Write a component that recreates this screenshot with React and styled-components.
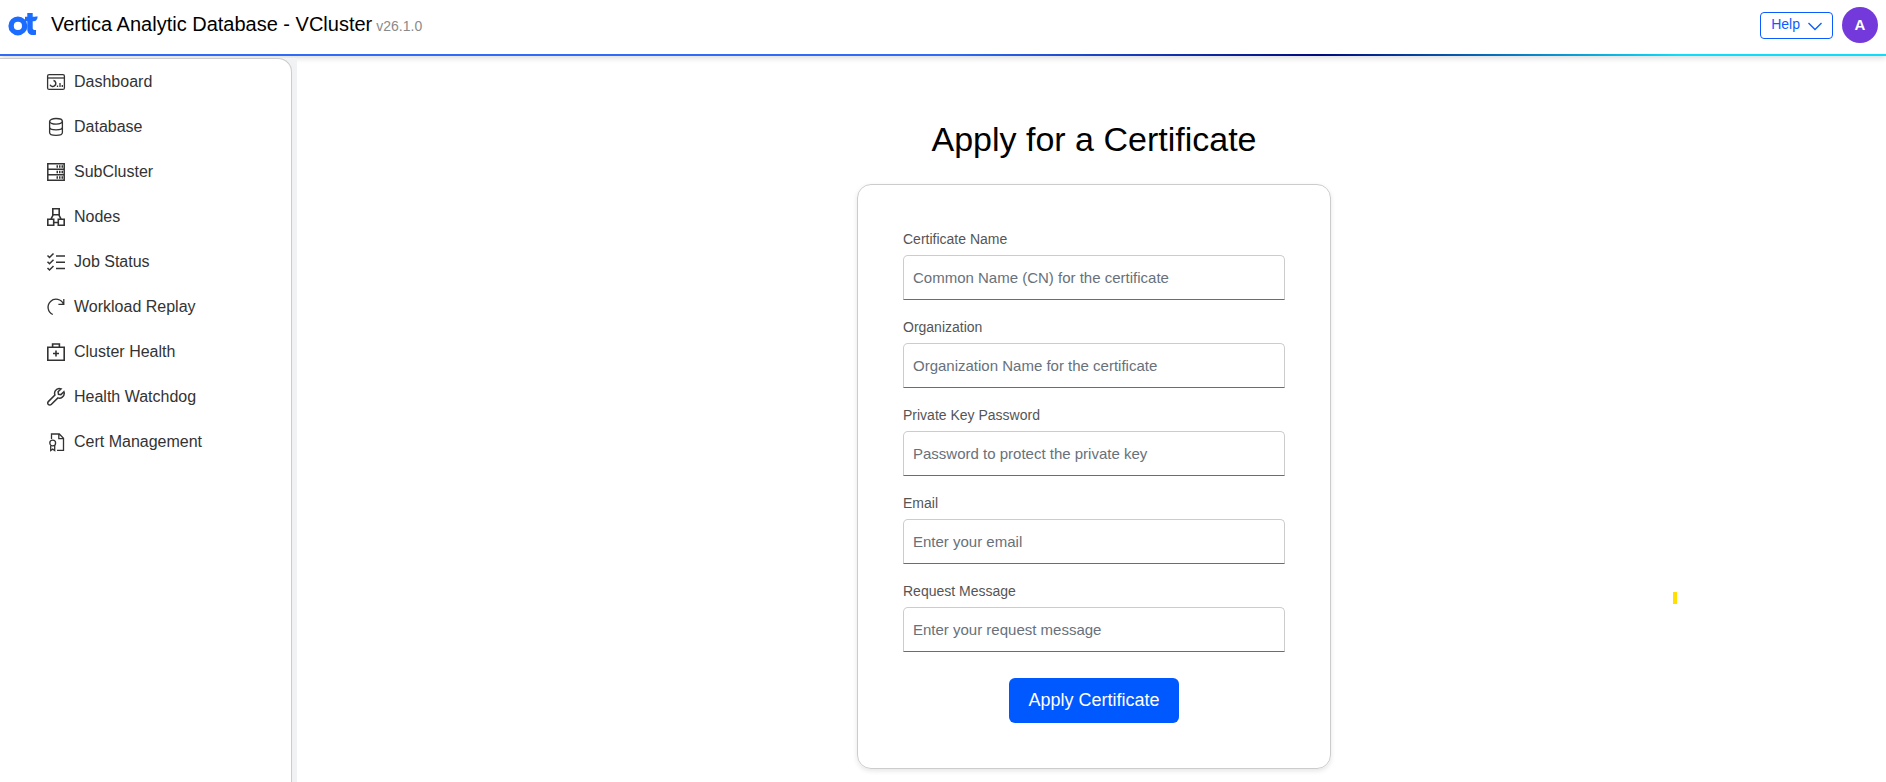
import React, { useState } from 'react'
import styled, { createGlobalStyle } from 'styled-components';

const GlobalStyle = createGlobalStyle`
  * {
    box-sizing: border-box;
  }
  body {
    margin: 0;
    background: #fff;
    color: #000;
    font-family: "Liberation Sans", Arial, sans-serif;
    font-size: 16px;
  }
`;

const Page = styled.div`
  display: flex;
  flex-direction: column;
  height: 100vh;
  overflow: hidden;
`;

const Header = styled.header`
  display: flex;
  align-items: center;
  flex: none;
  height: 56px;
  padding: 0 8px 4px;
  border-bottom: 2px solid;
  border-image: linear-gradient(90deg, #2f6df6 0%, #2f6df6 50%, #000a7d 70%, #0fdcf8 89%) 1;
  box-shadow: 0 2px 6px rgba(0, 0, 0, 0.15);
`;

const Brand = styled.div`
  display: flex;
  flex: 1;
  align-items: center;
  padding-bottom: 2px;
`;

const Product = styled.h1`
  margin: 0 4px 0 12px;
  font-size: 20px;
  font-weight: 400;
  line-height: 24px;
`;

const Version = styled.span`
  padding-top: 4px;
  color: #8a8a8a;
  font-size: 14px;
`;

const HelpButton = styled.button`
  display: flex;
  align-items: center;
  gap: 8px;
  height: 27px;
  margin-right: 9px;
  padding: 0 10px 2px;
  border: 1px solid #0a5cff;
  border-radius: 4px;
  background: #fff;
  color: #0a5cff;
  font-family: inherit;
  font-size: 14px;

  svg {
    margin-top: 4px;
  }
`;

const Avatar = styled.button`
  width: 36px;
  height: 36px;
  padding: 0 0 2px;
  border: 0;
  border-radius: 50%;
  background: #7439db;
  color: #fff;
  font-family: inherit;
  font-size: 15px;
  font-weight: 700;
`;

const Body = styled.div`
  display: flex;
  flex: 1;
  min-height: 0;
  padding-top: 2px;
`;

const SideArea = styled.div`
  flex: none;
  width: 297px;
  padding-right: 5px;
  background: #f1f2f4;
`;

const Sidebar = styled.nav`
  height: 100%;
  border: 1px solid #ccc;
  border-width: 1px 1px 0 0;
  border-radius: 0 14px 0 0;
  background: #fff;
`;

const Menu = styled.ul`
  margin: 0;
  padding: 0;
  list-style: none;
`;

const MenuLink = styled.a`
  display: flex;
  align-items: center;
  gap: 8px;
  height: 45px;
  padding-left: 46px;
  color: #333;
  text-decoration: none;

  svg {
    flex: none;
  }
`;

const Main = styled.main`
  display: flex;
  flex: 1;
  flex-direction: column;
  align-items: center;
  padding: 59px 0 0 5px;
`;

const Title = styled.h2`
  margin: 0 0 23px;
  font-size: 34px;
  font-weight: 400;
  line-height: 44px;
`;

const Card = styled.form`
  display: flex;
  flex-direction: column;
  width: 474px;
  padding: 45px;
  border: 1px solid #ccc;
  border-radius: 14px;
  box-shadow: 0 2px 5px rgba(0, 0, 0, 0.1);
`;

const Field = styled.div`
  display: flex;
  flex-direction: column;
  gap: 7px;
  margin-bottom: 18px;
`;

const Label = styled.label`
  color: #555;
  font-size: 14px;
  line-height: 18px;
`;

const Input = styled.input`
  height: 45px;
  padding: 0 9px;
  border: 1px solid #ccc;
  border-bottom-color: #6c6c72;
  border-radius: 5px 5px 0 0;
  background: #fff;
  font-family: inherit;
  font-size: 15px;

  &::placeholder {
    color: #67717b;
    opacity: 1;
  }
`;

const ApplyButton = styled.button`
  align-self: center;
  height: 45px;
  margin-top: 8px;
  padding: 0 19px;
  border: 0;
  border-radius: 6px;
  background: #0059ff;
  color: #fff;
  font-family: inherit;
  font-size: 18px;
`;

const Marker = styled.span`
  position: absolute;
  top: 592px;
  right: 209px;
  width: 4px;
  height: 12px;
  background: #ffe000;
`;

function Logo() {
  return (
    <svg width="31" height="24" viewBox="0 0 31 24" aria-hidden="true">
      <circle cx="9.9" cy="13.9" r="6.8" fill="none" stroke="#1b6cff" strokeWidth="5.4" />
      <path
        d="M19.3 1h5.4v3.700h1.600c1.200 0 1.500-.200 3.400-.200-.3 2.800-1.600 4.800-4 4.800h-1V16c0 1.500.7 2.100 3.300 2v4.700c-5.500 1-8.700-.9-8.700-5.500V9.300h-2.300V4.700h2.300z"
        fill="#1b6cff"
      />
    </svg>
  );
}

function Icon(props) {
  return (
    <svg width="20" height="20" viewBox="0 0 20 20" fill="none" stroke="#333" strokeWidth={props.weight || 1.3} aria-hidden="true">
      {props.children}
    </svg>
  );
}

const menuItems = [
  {
    name: 'Dashboard',
    icon: (
      <Icon>
        <rect x="1.6" y="2.6" width="16.8" height="14.8" rx="1.5" />
        <path d="M2 6h16" />
        <path d="M7.5 8.5a3 3 0 1 1-3.4 4.2" strokeWidth="1.5" />
        <path d="M11.5 15v-1.5M14 15v-4M16.3 15v-2" />
      </Icon>
    ),
  },
  {
    name: 'Database',
    icon: (
      <Icon>
        <ellipse cx="10" cy="4.3" rx="6.4" ry="2.8" />
        <path d="M3.6 4.3v11.2c0 1.6 2.8 2.9 6.4 2.9s6.4-1.300 6.400-2.900V4.300M3.600 10c0 1.600 2.800 2.900 6.400 2.900s6.400-1.300 6.400-2.900" />
      </Icon>
    ),
  },
  {
    name: 'SubCluster',
    icon: (
      <Icon weight={1.5}>
        <path d="M1.8 1.8h16.4v16.4H1.8zM1.8 7.3h16.4M1.8 12.7h16.4" />
        <path d="M10.5 4.6h6.5M10.5 10h6.5M10.5 15.4h6.5" strokeWidth="2.5" strokeDasharray="1.5 1" />
      </Icon>
    ),
  },
  {
    name: 'Nodes',
    icon: (
      <Icon weight={1.6}>
        <path d="M6.8 1.8h6.4v5.9H6.800zM1.800 12.300h5.900v5.900H1.800zM12.300 12.300h5.900v5.900h-5.900zM7.700 15.500h4.600M7.300 7.700l-2.500 4.600M12.700 7.700l2.500 4.600" />
      </Icon>
    ),
  },
  {
    name: 'Job Status',
    icon: (
      <Icon weight={1.5}>
        <path d="M1.5 3.500l2 2L7.500 1.500M1.500 9.700l2 2 4-4M1.500 16l2 2 4-4M10 4h9M10 10.200h9M10 16.400h9" />
      </Icon>
    ),
  },
  {
    name: 'Workload Replay',
    icon: (
      <Icon>
        <path d="M6.8 17.500A8 8 0 1 1 17.500 7.200M17.800 2v5.400h-5.400" />
      </Icon>
    ),
  },
  {
    name: 'Cluster Health',
    icon: (
      <Icon weight={1.6}>
        <path d="M1.8 5.300h16.400v12.900H1.800zM6.600 5.300V2h6.800v3.300M10 8.500v6M7 11.500h6" />
      </Icon>
    ),
  },
  {
    name: 'Health Watchdog',
    icon: (
      <Icon weight={1.5}>
        <path d="M17.9 4.700l-3 2.900-2.400-.3-.4-2.500 3-2.900c-2.100-.7-4.500 0-5.700 1.800-.9 1.300-1 2.900-.5 4.300l-6.600 6.600a2.050 2.050 0 0 0 2.900 2.900l6.700-6.600c1.500.5 3.200.2 4.400-.8 1.600-1.300 2.300-3.500 1.600-5.400z" />
      </Icon>
    ),
  },
  {
    name: 'Cert Management',
    icon: (
      <Icon>
        <path d="M5.5 7V2h7.800l4.200 4.200v12.100H11M12.800 2v4.700h4.700" />
        <circle cx="6.7" cy="11" r="2.9" />
        <path d="M4.7 13.500v5l2-1.400 2 1.400v-5" />
      </Icon>
    ),
  },
];

const fields = [
  { id: 'name', label: 'Certificate Name', placeholder: 'Common Name (CN) for the certificate', type: 'text' },
  { id: 'organization', label: 'Organization', placeholder: 'Organization Name for the certificate', type: 'text' },
  { id: 'password', label: 'Private Key Password', placeholder: 'Password to protect the private key', type: 'password' },
  { id: 'email', label: 'Email', placeholder: 'Enter your email', type: 'email' },
  { id: 'message', label: 'Request Message', placeholder: 'Enter your request message', type: 'text' },
];

function CertificateForm() {
  const [values, setValues] = useState({});

  const saveValue = (event) => {
    setValues({ ...values, [event.target.id]: event.target.value });
  }

  return (
    <Card onSubmit={(event) => event.preventDefault()}>
      {fields.map((field) => (
        <Field key={field.id}>
          <Label htmlFor={field.id}>{field.label}</Label>
          <Input
            id={field.id}
            type={field.type}
            placeholder={field.placeholder}
            value={values[field.id] || ''}
            onChange={saveValue}
          />
        </Field>
      ))}
      <ApplyButton type="submit">Apply Certificate</ApplyButton>
    </Card>
  );
}

function App() {
  return (
    <Page>
      <GlobalStyle />
      <Header>
        <Brand>
          <Logo />
          <Product>Vertica Analytic Database - VCluster</Product>
          <Version>v26.1.0</Version>
        </Brand>
        <HelpButton type="button">
          Help
          <svg width="14" height="9" viewBox="0 0 14 9" fill="none" stroke="currentColor" strokeWidth="1.3" aria-hidden="true">
            <path d="M.5 1l6.500 6.500L13.500 1" />
          </svg>
        </HelpButton>
        <Avatar type="button">A</Avatar>
      </Header>
      <Body>
        <SideArea>
          <Sidebar>
            <Menu>
              {menuItems.map((item) => (
                <li key={item.name}>
                  <MenuLink href="#">
                    {item.icon}
                    {item.name}
                  </MenuLink>
                </li>
              ))}
            </Menu>
          </Sidebar>
        </SideArea>
        <Main>
          <Title>Apply for a Certificate</Title>
          <CertificateForm />
        </Main>
      </Body>
      <Marker />
    </Page>
  );
}

export default App;
